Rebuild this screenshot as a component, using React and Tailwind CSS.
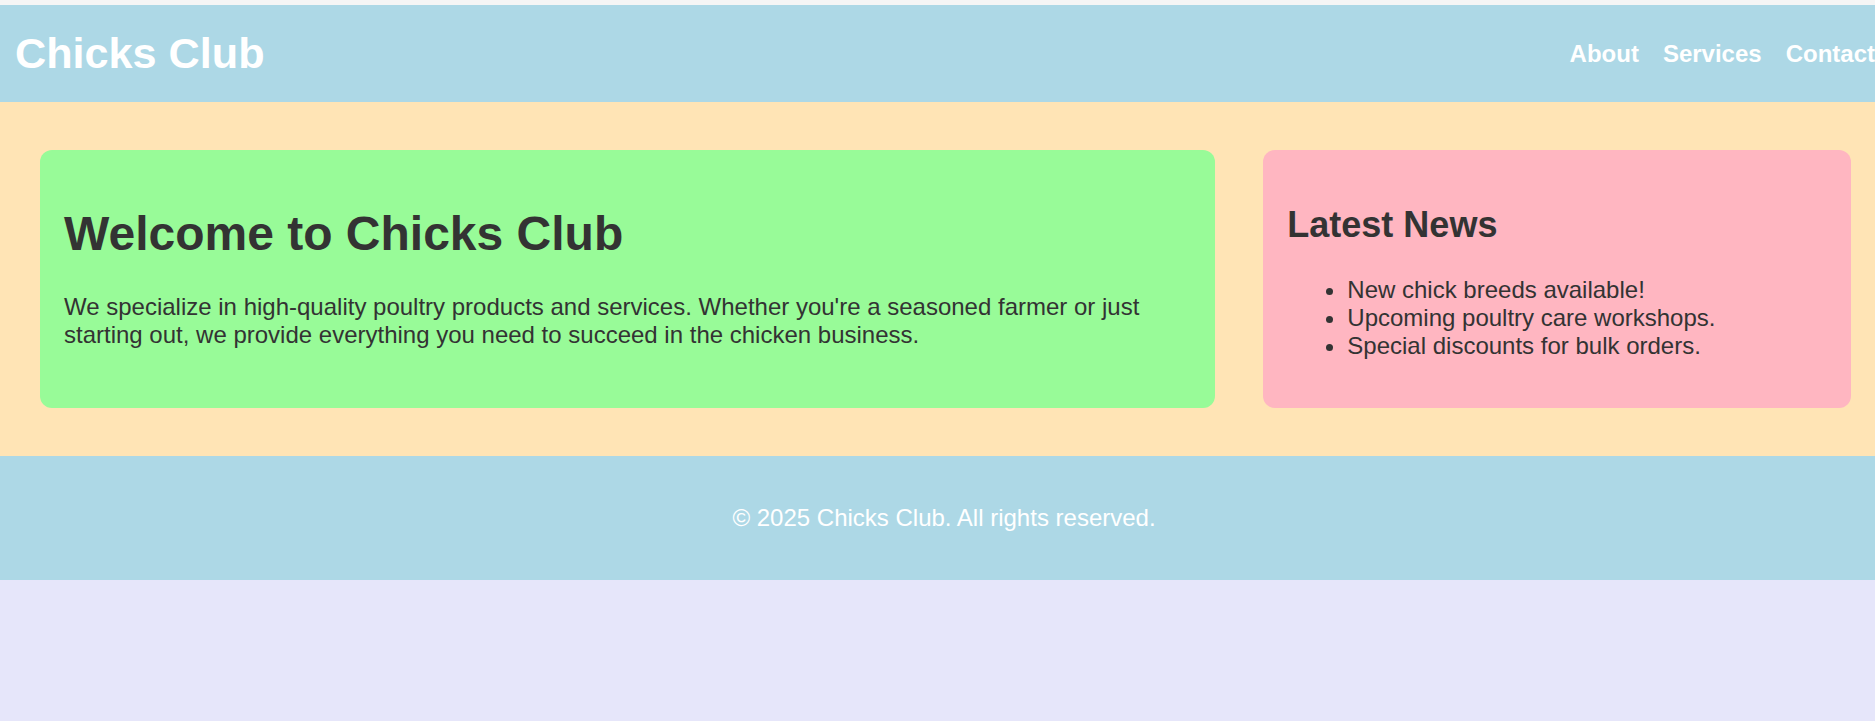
function App() {
  const news = [
    'New chick breeds available!',
    'Upcoming poultry care workshops.',
    'Special discounts for bulk orders.',
  ];

  return (
    <div className="min-h-screen bg-[#e6e6fa] text-[#333] font-['Liberation_Sans',Arial,sans-serif] leading-[normal] overflow-hidden">
      <div className="h-[5px] bg-[#f5f5f5]" />

      {/* Header */}
      <header className="h-[97px] bg-[#add8e6] flex items-center justify-between pl-[15px] pr-0">
        <h1 className="text-[43.2px] font-bold text-white">Chicks Club</h1>
        <nav className="flex items-center gap-6">
          <a className="text-[24px] font-bold text-white">About</a>
          <a className="text-[24px] font-bold text-white">Services</a>
          <a className="text-[24px] font-bold text-white">Contact</a>
        </nav>
      </header>

      {/* Main */}
      <main className="bg-[#ffe4b5] grid grid-cols-[2fr_1fr] gap-12 pl-10 pr-6 py-12">
        <section className="bg-[#98fb98] rounded-xl p-6">
          <h2 className="text-[48px] font-bold mt-8 mb-8">Welcome to Chicks Club</h2>
          <p className="text-[24px] mb-6">
            We specialize in high-quality poultry products and services. Whether you're a seasoned farmer or just
            starting out, we provide everything you need to succeed in the chicken business.
          </p>
        </section>

        <aside className="bg-[#ffb6c1] rounded-xl p-6">
          <h2 className="text-[36px] font-bold mt-[30px] mb-[30px]">Latest News</h2>
          <ul className="list-disc pl-[60px] text-[24px] mb-6">
            {news.map((item) => (
              <li key={item}>{item}</li>
            ))}
          </ul>
        </aside>
      </main>

      {/* Footer */}
      <footer className="h-[124px] bg-[#add8e6] flex items-center justify-center pl-[13px]">
        <p className="text-[24px] text-white">© 2025 Chicks Club. All rights reserved.</p>
      </footer>
    </div>
  );
}

export default App;
